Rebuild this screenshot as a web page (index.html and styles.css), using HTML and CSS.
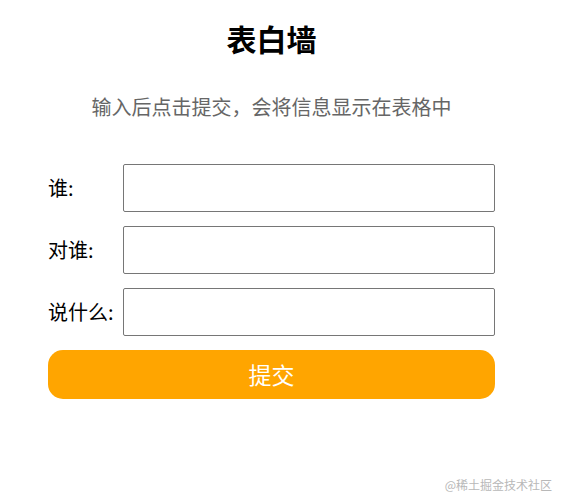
FILE: index.html
```html
<!DOCTYPE html>
<html lang="zh">
<head>
<meta charset="utf-8">
<title>表白墙</title>
<link rel="stylesheet" href="styles.css">
</head>
<body>
<div class="container">
  <h1 class="title">表白墙</h1>
  <p class="subtitle">输入后点击提交，会将信息显示在表格中</p>
  <div class="row"><span class="label">谁:</span><input class="field" type="text"></div>
  <div class="row"><span class="label">对谁:</span><input class="field" type="text"></div>
  <div class="row"><span class="label">说什么:</span><input class="field" type="text"></div>
  <button class="submit" type="button">提交</button>
</div>
<div class="watermark">@稀土掘金技术社区</div>
</body>
</html>
```

FILE: styles.css
```css
html, body {
  margin: 0;
  padding: 0;
  background: #fff;
}
body {
  font-family: "Noto Sans CJK SC", "Noto Sans", sans-serif;
  color: #000;
  width: 566px;
  height: 503px;
  position: relative;
  overflow: hidden;
}
.container {
  width: 447px;
  margin-left: 48px;
  padding-top: 16px;
  display: flex;
  flex-direction: column;
}
.title {
  margin: 0;
  font-size: 30px;
  line-height: 44px;
  font-weight: 700;
  text-align: center;
}
.subtitle {
  margin: 32px 0 0;
  font-size: 20px;
  line-height: 30px;
  color: #666;
  text-align: center;
}
.row {
  display: flex;
  align-items: center;
  height: 48px;
  margin-top: 14px;
}
.row:first-of-type {
  margin-top: 42px;
}
.label {
  width: 75px;
  font-size: 20px;
  line-height: 24px;
  flex: none;
  white-space: nowrap;
}
.field {
  width: 372px;
  height: 48px;
  box-sizing: border-box;
  border: 1px solid #767676;
  border-radius: 2px;
  padding: 0 4px;
  margin: 0;
  font-size: 16px;
}
.submit {
  margin-top: 14px;
  height: 49px;
  width: 447px;
  border: none;
  border-radius: 15px;
  background: #ffa500;
  color: #fff;
  font-family: "Noto Sans CJK SC", "Noto Sans", sans-serif;
  font-size: 23px;
  padding: 0 0 2px;
}
.watermark {
  position: absolute;
  right: 14px;
  bottom: 10px;
  font-size: 12px;
  color: #b8b8b8;
}
```
